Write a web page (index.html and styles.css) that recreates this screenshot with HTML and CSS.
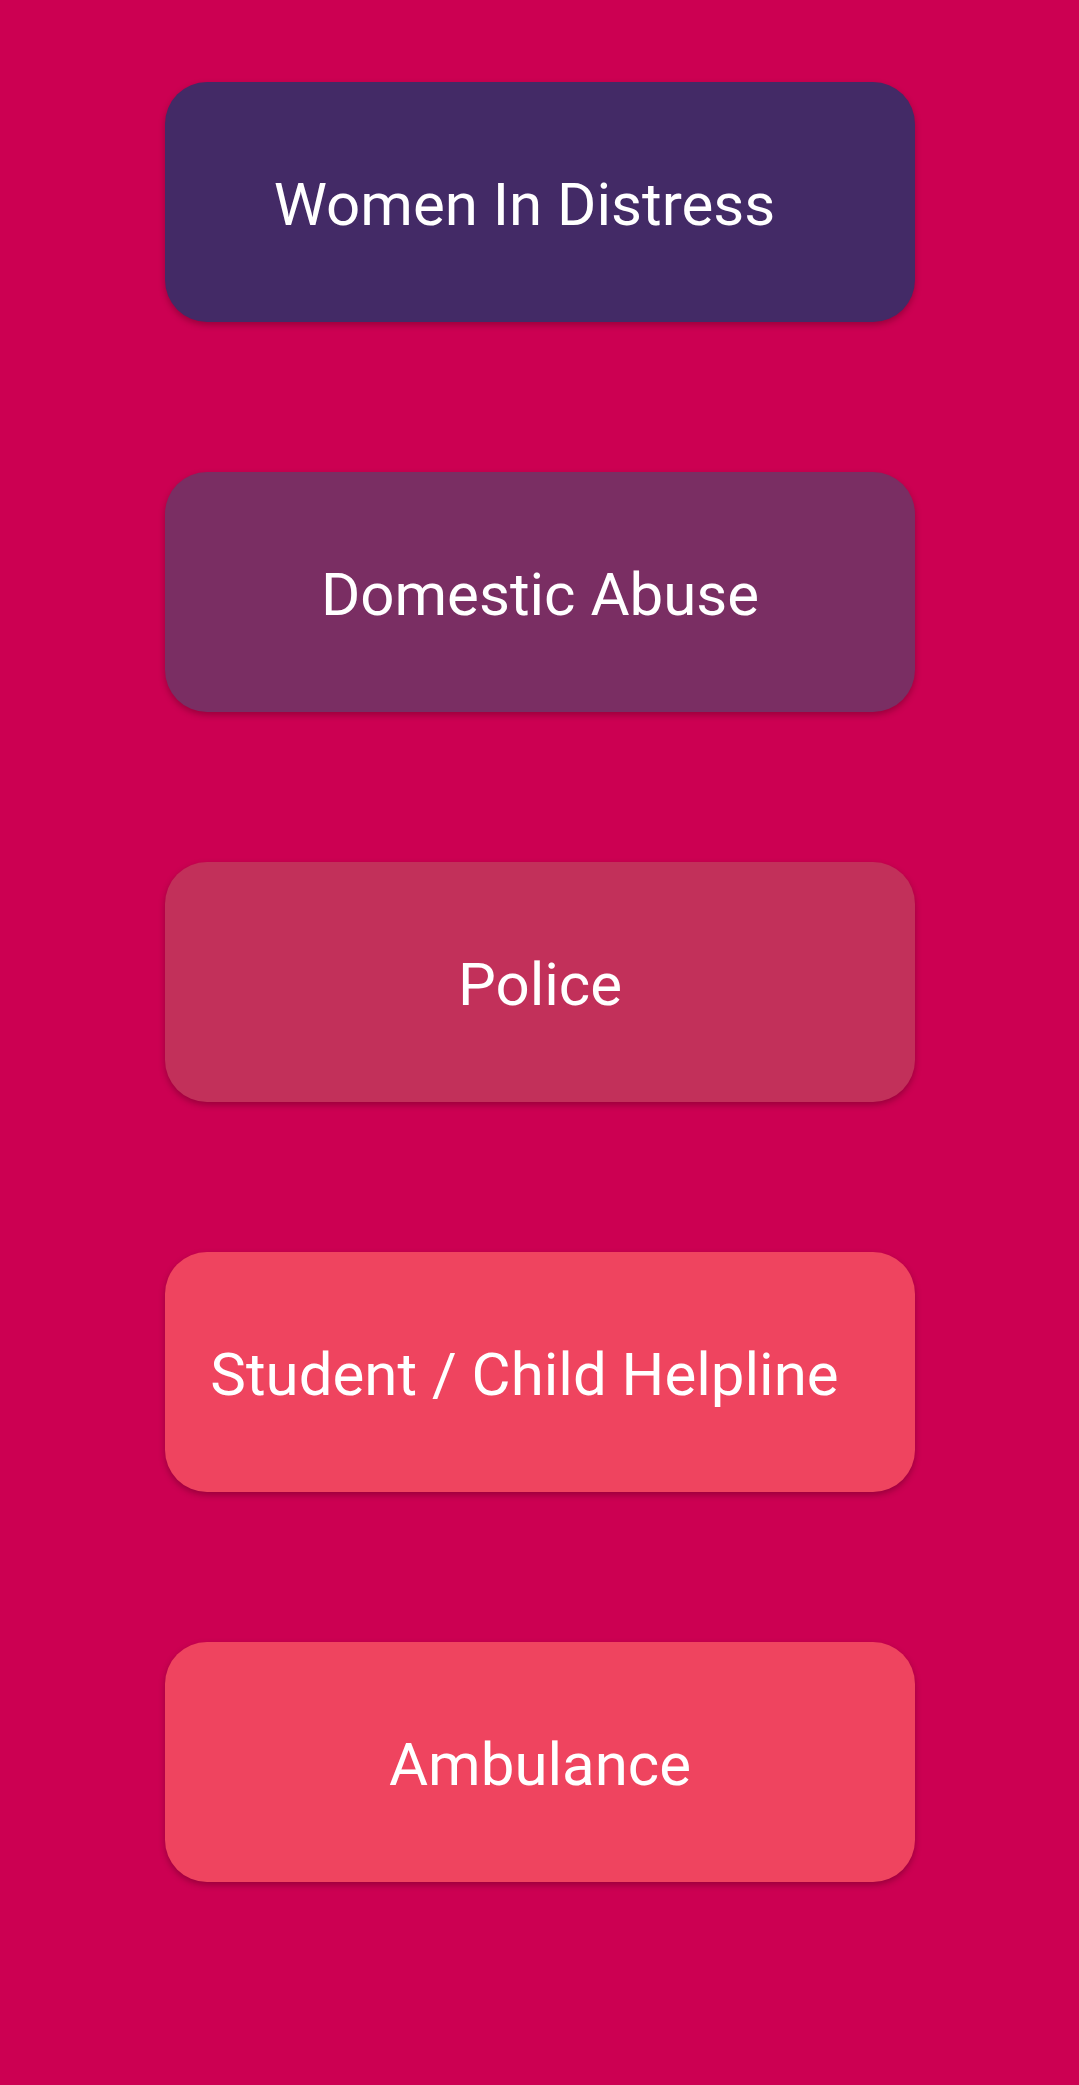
FILE: index.html
```html
<!DOCTYPE html>
<html>
<head>
<meta charset="utf-8">
<link rel="stylesheet" href="styles.css">
</head>
<body>
<main class="list">
  <button class="btn btn-women btn-shift">Women In Distress</button>
  <button class="btn btn-domestic">Domestic Abuse</button>
  <button class="btn btn-police">Police</button>
  <button class="btn btn-child btn-shift">Student / Child Helpline</button>
  <button class="btn btn-ambulance">Ambulance</button>
</main>
</body>
</html>
```
FILE: styles.css
```css
html, body {
  margin: 0;
  padding: 0;
  background: #cc0052;
}
body {
  width: 1079px;
  height: 2085px;
  font-family: Roboto, "Noto Sans", sans-serif;
}
.list {
  display: flex;
  flex-direction: column;
  align-items: center;
  gap: 150px;
  padding-top: 82px;
  padding-left: 1px;
}
.btn {
  width: 750px;
  height: 240px;
  border: none;
  border-radius: 42px;
  display: flex;
  align-items: center;
  justify-content: center;
  color: #ffffff;
  font-family: Roboto, "Noto Sans", sans-serif;
  font-size: 60px;
  font-weight: 400;
  padding: 4px 0 0 0;
  box-shadow: 0 3px 6px rgba(60, 0, 20, 0.35);
}
.btn-shift {
  padding-right: 31px;
}
.btn-women { background: #432a66; }
.btn-domestic { background: #7a2e63; }
.btn-police { background: #c2305a; }
.btn-child { background: #ef445f; }
.btn-ambulance { background: #ef445f; }
```
